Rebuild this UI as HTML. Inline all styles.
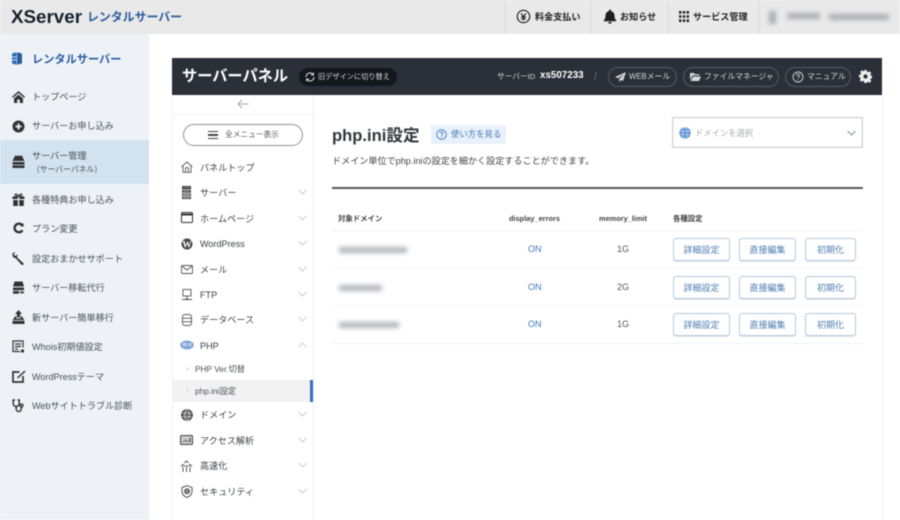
<!DOCTYPE html>
<html lang="ja"><head><meta charset="utf-8"><title>php.ini設定</title>
<style>
*{box-sizing:border-box}
html,body{margin:0;padding:0;width:900px;height:520px;overflow:hidden;background:#fff}
body{position:relative;font-family:"Liberation Sans","Noto Sans CJK JP",sans-serif;color:#444;filter:blur(.45px)}
.a{position:absolute;white-space:nowrap}
.t{position:absolute;white-space:nowrap;line-height:16px;height:16px}
svg{position:absolute;display:block}
.s{font-size:9.1px;color:#4a4f55}
.m{font-size:9.1px;color:#3d4148}
.top{font-size:9.1px;font-weight:700;color:#222}
.btn{position:absolute;height:23px;border:1px solid #b3c9da;border-radius:3px;color:#4f7db0;font-size:9px;line-height:22px;text-align:center;background:#fff;box-shadow:0 1px 0 #dfe6ec}
.pill{position:absolute;top:67px;height:20px;border:1px solid #565b63;border-radius:10px;color:#d6d8da;font-size:7.800px;line-height:18px;white-space:nowrap}
.blur{position:absolute;background:#85898e;filter:blur(2.4px);opacity:.62}
.line{position:absolute;height:1px;background:#eef0f1}
.th{font-size:7.400px;font-weight:700;color:#444}
.on{font-size:9px;color:#3f78bb}
.lim{font-size:9px;color:#555}
</style></head><body>

<!-- top bar -->
<div class="a" style="left:0;top:0;width:900px;height:34px;background:#e9e9e9"></div>
<div class="t" style="left:11px;top:7px;height:20px;line-height:20px;font-size:18.800px;font-weight:700;color:#15212d">XServer</div>
<div class="t" style="left:87px;top:9px;font-size:11.900px;font-weight:700;color:#2a5c9e">レンタルサーバー</div>
<div class="a" style="left:505px;top:0;width:1px;height:34px;background:#dcdcdc"></div>
<div class="a" style="left:591px;top:0;width:1px;height:34px;background:#dcdcdc"></div>
<div class="a" style="left:668px;top:0;width:1px;height:34px;background:#dcdcdc"></div>
<div class="a" style="left:759px;top:0;width:1px;height:34px;background:#dcdcdc"></div>
<svg style="left:516px;top:9px" width="15" height="15" viewBox="0 0 15 15" fill="none" stroke="#222" stroke-width="1.2"><circle cx="7.5" cy="7.5" r="6.2"/><path d="M5 4.500l2.500 3 2.500-3M7.500 7.500v4M5.200 8h4.600M5.200 9.800h4.600"/></svg>
<div class="t top" style="left:535px;top:9px">料金支払い</div>
<svg style="left:603px;top:9px" width="14" height="15" viewBox="0 0 14 15" fill="#1e1e1e"><path d="M7 0.500a1 1 0 0 1 1 1v.6c2.300.5 3.500 2.300 3.500 4.600 0 2.500.7 3.600 1.800 4.800v.8H.7v-.8C1.800 10.300 2.500 9.200 2.500 6.700c0-2.300 1.200-4.100 3.500-4.600v-.6a1 1 0 0 1 1-1zM5.300 13h3.400a1.700 1.700 0 0 1-3.400 0z"/></svg>
<div class="t top" style="left:620px;top:9px">お知らせ</div>
<svg style="left:679px;top:11px" width="10" height="11" viewBox="0 0 10 11" fill="#222"><path d="M0 0h2.400v2.600H0zM3.800 0h2.400v2.600H3.800zM7.600 0H10v2.600H7.600zM0 4.200h2.400v2.600H0zM3.800 4.200h2.400v2.600H3.800zM7.600 4.200H10v2.600H7.600zM0 8.400h2.400V11H0zM3.800 8.400h2.400V11H3.800zM7.600 8.400H10V11H7.600z"/></svg>
<div class="t top" style="left:693px;top:9px">サービス管理</div>
<div class="blur" style="left:769px;top:11px;width:7px;height:13px"></div>
<div class="blur" style="left:787px;top:13px;width:33px;height:6px"></div>
<div class="blur" style="left:829px;top:14px;width:60px;height:6px"></div>

<!-- left sidebar -->
<div class="a" style="left:0;top:34px;width:149px;height:486px;background:#eef2f7"></div>
<div class="a" style="left:0;top:140px;width:149px;height:44px;background:#d2e2ee"></div>
<svg style="left:11px;top:52px" width="12" height="13" viewBox="0 0 12 13"><path d="M6 .5c2 0 5 .8 5 1.800v8.400c0 1-3 1.800-5 1.800z" fill="#2a5c9e"/><path d="M5.500.5C3.500.5 1 1.300 1 2.300v8.400c0 1 2.500 1.800 4.500 1.800z" fill="#2f6cb5"/><path d="M1 5h4.500M1 8h4.500" stroke="#fff" stroke-width=".8"/></svg>
<div class="t" style="left:32px;top:52px;font-size:11.200px;font-weight:700;color:#2a5c9e">レンタルサーバー</div>

<svg style="left:12px;top:91px" width="13" height="12" viewBox="0 0 13 12" fill="#333"><path d="M6.500 0L0 5.800l1 1.100 5.500-4.900 5.500 4.900 1-1.100zM2 7.500V12h3.200V8.500h2.600V12H11V7.500L6.500 3.500z"/></svg>
<div class="t s" style="left:32px;top:89px">トップページ</div>
<svg style="left:12px;top:120px" width="13" height="13" viewBox="0 0 13 13"><circle cx="6.500" cy="6.500" r="6" fill="#333"/><path d="M6.500 3.500v6M3.500 6.500h6" stroke="#eef2f7" stroke-width="1.800"/></svg>
<div class="t s" style="left:32px;top:118px">サーバーお申し込み</div>
<svg style="left:12px;top:155px" width="13" height="13" viewBox="0 0 13 13" fill="#333"><path d="M3 .8h7l2.400 5.200H.6zM.5 7h12v2.600H.5zM.5 10.400h12V13H.5z"/></svg>
<div class="t s" style="left:32px;top:148px">サーバー管理</div>
<div class="t" style="left:32px;top:162px;font-size:7.800px;color:#4a4f55">（サーバーパネル）</div>
<svg style="left:12px;top:193px" width="13" height="13" viewBox="0 0 13 13" fill="#333"><path d="M.5 3.500h5.300v2.500H.5zM7.200 3.500h5.300v2.500H7.200zM1.200 7h4.600v6H1.200zM7.200 7h4.600v6H7.200z"/><path d="M6.500 3.300C5 .5 2.800.5 3 2c.2 1 2 1.300 3.500 1.300zM6.500 3.300C8 .5 10.200.5 10 2c-.2 1-2 1.300-3.500 1.300z" fill="none" stroke="#333" stroke-width="1.100"/></svg>
<div class="t s" style="left:32px;top:192px">各種特典お申し込み</div>
<svg style="left:13px;top:222px" width="11" height="12" viewBox="0 0 11 12" fill="none" stroke="#333" stroke-width="2.400"><path d="M9.200 3.200A4.300 4.300 0 1 0 9.500 8.300"/><path d="M10.600 1v3.500H7.100z" stroke="none" fill="#333"/></svg>
<div class="t s" style="left:32px;top:221px">プラン変更</div>
<svg style="left:12px;top:252px" width="13" height="13" viewBox="0 0 13 13" fill="#333"><path d="M.4 2.800C.4 1.200 1.800.2 3.500.3L1.900 2l.4 1.500 1.500.4 1.600-1.600c.3 1.200 0 2.200-.6 2.900l6.400 5.800c.5.5.5 1.200 0 1.700s-1.200.5-1.700 0L3.600 6.100C2 6.300.4 4.800.4 2.800z"/></svg>
<div class="t s" style="left:32px;top:251px">設定おまかせサポート</div>
<svg style="left:12px;top:281px" width="13" height="13" viewBox="0 0 13 13" fill="#333"><path d="M2.500.5h8l1.500 5H1zM1 6.500h11v2.700H1zM1 10h6v2.800H1zM8 10.500h4v1.800H8z"/></svg>
<div class="t s" style="left:32px;top:280px">サーバー移転代行</div>
<svg style="left:12px;top:310px" width="13" height="14" viewBox="0 0 13 14" fill="#333"><path d="M6.500 0L10 4H8v3.500H5V4H3zM3.500 6h.8v2.500h4.400V6h.8l3 4H.5zM.5 10.800h12V14H.5z"/></svg>
<div class="t s" style="left:32px;top:310px">新サーバー簡単移行</div>
<svg style="left:12px;top:340px" width="13" height="13" viewBox="0 0 13 13" fill="none" stroke="#333" stroke-width="1.200"><path d="M8 11.500H1V1h10v6.500M3 4h6M3 6.500h6M3 9h3"/><path d="M9 9.500h3v3H9z" fill="#333" stroke="none"/></svg>
<div class="t s" style="left:32px;top:339px">Whois初期値設定</div>
<svg style="left:12px;top:370px" width="14" height="13" viewBox="0 0 14 13" fill="none" stroke="#333" stroke-width="1.700"><path d="M7.500 2H1v10h10V6"/><path d="M5.500 8L13 1" stroke-width="1.500"/></svg>
<div class="t s" style="left:32px;top:369px">WordPressテーマ</div>
<svg style="left:12px;top:399px" width="13" height="14" viewBox="0 0 13 14" fill="none" stroke="#333" stroke-width="1.500"><path d="M3 1H1.200v3.500a3 3 0 0 0 6 0V1H5.500"/><path d="M4.200 7.500V10a2.500 2.500 0 0 0 5 0V8"/><circle cx="9.500" cy="6.500" r="1.400"/></svg>
<div class="t s" style="left:32px;top:398px">Webサイトトラブル診断</div>

<!-- panel header -->
<div class="a" style="left:172px;top:58px;width:710px;height:37px;background:#2b3038"></div>
<div class="t" style="left:182px;top:67px;height:20px;line-height:20px;font-size:15.200px;font-weight:700;color:#fff">サーバーパネル</div>
<div class="a" style="left:299px;top:68px;width:98px;height:18px;border-radius:9px;background:#14171c"></div>
<svg style="left:305px;top:72px" width="10" height="10" viewBox="0 0 10 10" fill="none" stroke="#d6d8da" stroke-width="1.100"><path d="M1 5a4 4 0 0 1 7-2.600M9 5a4 4 0 0 1-7 2.600"/><path d="M8.500 .5v2.500H6M1.500 9.500V7H4" stroke-width=".9"/></svg>
<div class="t" style="left:318px;top:69px;font-size:7.200px;color:#d6d8da">旧デザインに切り替え</div>
<div class="t" style="left:497px;top:69px;font-size:7.700px;color:#d6d8da">サーバーID</div>
<div class="t" style="left:540px;top:68px;font-size:9.800px;font-weight:700;color:#fff">xs507233</div>
<div class="t" style="left:594px;top:69px;font-size:11px;color:#6a6f76">/</div>
<div class="pill" style="left:608px;width:69px;padding-left:20px">WEBメール</div>
<svg style="left:615px;top:72px" width="11" height="10" viewBox="0 0 11 10" fill="#d6d8da"><path d="M11 0L0 5l3 1.300L9 2 4.200 7v3l1.800-2 2 1z"/></svg>
<div class="pill" style="left:683px;width:96px;padding-left:20px">ファイルマネージャ</div>
<svg style="left:690px;top:72px" width="11" height="10" viewBox="0 0 11 10" fill="#d6d8da"><path d="M0 1h4l1 1.200h4.500v1.300H2.500L0 8zM3 4.500h8L9 9H.6z"/></svg>
<div class="pill" style="left:785px;width:66px;padding-left:21px">マニュアル</div>
<svg style="left:792px;top:71px" width="12" height="12" viewBox="0 0 12 12" fill="none" stroke="#d6d8da" stroke-width=".9"><circle cx="6" cy="6" r="5"/><path d="M4.500 4.700a1.500 1.500 0 1 1 2.200 1.300c-.5.300-.7.600-.7 1.100M6 8.200v1"/></svg>
<svg style="left:859px;top:70px" width="13" height="13" viewBox="0 0 13 13"><path d="M5.300 0h2.400l.3 1.700 1.100.5L10.600 1.200l1.700 1.700-1 1.500.5 1.100 1.700.3v2.400l-1.700.3-.5 1.100 1 1.500-1.700 1.700-1.500-1-1.100.5-.3 1.700H5.300L5 11.300l-1.100-.5-1.500 1L.7 10.100l1-1.500-.5-1.100L0 7.200V4.800l1.700-.3.500-1.100-1-1.500L2.900 .2l1.500 1 1.100-.5z" fill="#eee"/><circle cx="6.500" cy="6.500" r="2.100" fill="#2b3038"/></svg>

<!-- panel borders -->
<div class="a" style="left:172px;top:95px;width:1px;height:425px;background:#f0f1f2"></div>
<div class="a" style="left:313px;top:95px;width:1px;height:425px;background:#eceef0"></div>
<div class="a" style="left:882px;top:95px;width:1px;height:425px;background:#eceef0"></div>
<div class="line" style="left:173px;top:114px;width:140px"></div>

<!-- nav -->
<svg style="left:237px;top:99px" width="12" height="10" viewBox="0 0 12 10" fill="none" stroke="#a8abae" stroke-width="1"><path d="M11.500 5H1M5 1L1 5l4 4"/></svg>
<div class="a" style="left:183px;top:124px;width:120px;height:22px;border:1px solid #8f9398;border-radius:11px"></div>
<div class="a" style="left:208px;top:131px;width:10px;height:8px;border-top:1.500px solid #444;border-bottom:1.500px solid #444"></div>
<div class="a" style="left:208px;top:134.300px;width:10px;height:1.400px;background:#444"></div>
<div class="t" style="left:225px;top:127px;font-size:7.700px;color:#555">全メニュー表示</div>

<svg style="left:181px;top:161px" width="12" height="12" viewBox="0 0 12 12" fill="none" stroke="#555" stroke-width=".9"><path d="M.5 5.800L6 1l5.500 4.800M2 5v6.300h8V5M4.500 11V8a1.500 1.500 0 0 1 3 0v3"/></svg>
<div class="t m" style="left:200px;top:160px">パネルトップ</div>
<svg style="left:182px;top:186px" width="9" height="13" viewBox="0 0 9 13" fill="#333"><path d="M0 0h9v3.400H0zM0 4.200h9v2.600H0zM0 7.600h9v2.200H0zM0 10.600h9V13H0z"/><path d="M1 1.500h7M1 5.500h7M1 8.700h7M1 11.800h7" stroke="#eee" stroke-width=".6"/></svg>
<div class="t m" style="left:200px;top:185px">サーバー</div>
<svg style="left:181px;top:212px" width="12" height="11" viewBox="0 0 12 11" fill="none" stroke="#333"><rect x=".5" y=".5" width="11" height="10" rx="1"/><path d="M.5 2.500h11" stroke-width="2"/></svg>
<div class="t m" style="left:200px;top:211px">ホームページ</div>
<svg style="left:181px;top:238px" width="12" height="12" viewBox="0 0 12 12"><circle cx="6" cy="6" r="5.500" fill="#444"/><text x="6" y="9.300" text-anchor="middle" font-family="Liberation Serif" font-weight="700" font-size="9.500" fill="#fff">W</text></svg>
<div class="t m" style="left:200px;top:236px">WordPress</div>
<svg style="left:181px;top:265px" width="12" height="9" viewBox="0 0 12 9" fill="none" stroke="#555" stroke-width=".9"><rect x=".5" y=".5" width="11" height="8" rx="1"/><path d="M.8 1L6 5l5.200-4"/></svg>
<div class="t m" style="left:200px;top:262px">メール</div>
<svg style="left:182px;top:289px" width="10" height="12" viewBox="0 0 10 12" fill="none" stroke="#555" stroke-width=".9"><rect x="1" y=".5" width="8" height="6.500"/><path d="M5 7v3M0 10.500h10M3.500 10h3" /></svg>
<div class="t m" style="left:200px;top:287px">FTP</div>
<svg style="left:182px;top:314px" width="10" height="12" viewBox="0 0 10 12" fill="none" stroke="#555" stroke-width=".9"><rect x=".5" y=".5" width="9" height="11" rx="2.500"/><path d="M.5 4.200h9M.5 7.800h9"/></svg>
<div class="t m" style="left:200px;top:312px">データベース</div>
<svg style="left:180px;top:340px" width="14" height="10" viewBox="0 0 14 10"><ellipse cx="7" cy="5" rx="6.800" ry="4.500" fill="#7ea5d4"/><path d="M3 3.500h2v2H3zM9 3.500h2v2H9zM6.200 3v3.500" stroke="#e8f0f8" stroke-width=".7" fill="none"/></svg>
<div class="t m" style="left:200px;top:338px">PHP</div>

<div class="a" style="left:173px;top:380px;width:137px;height:22px;background:#f2f2f3"></div>
<div class="a" style="left:310px;top:380px;width:3px;height:22px;background:#3570c0"></div>
<div class="t" style="left:186px;top:361px;font-size:8px;color:#b5b8bb">›</div>
<div class="t" style="left:195px;top:361px;font-size:8.300px;color:#4a4f55">PHP Ver.切替</div>
<div class="t" style="left:186px;top:383px;font-size:8px;color:#b5b8bb">›</div>
<div class="t" style="left:195px;top:383px;font-size:8.300px;color:#4a4f55">php.ini設定</div>

<svg style="left:181px;top:409px" width="12" height="12" viewBox="0 0 12 12" fill="none" stroke="#333" stroke-width="1.100"><circle cx="6" cy="6" r="5.300" fill="#666"/><ellipse cx="6" cy="6" rx="2.400" ry="5.300" stroke="#ddd" stroke-width=".7"/><path d="M.8 4.200h10.400M.8 7.800h10.400" stroke="#ddd" stroke-width=".7"/></svg>
<div class="t m" style="left:200px;top:407px">ドメイン</div>
<svg style="left:180px;top:435px" width="13" height="10" viewBox="0 0 13 10" fill="none" stroke="#444"><rect x=".5" y=".5" width="12" height="9" rx="1" fill="#ccc"/><path d="M3 7V6M5.500 7V4.500M8 7V5.500M10 7V3" stroke="#333"/></svg>
<div class="t m" style="left:200px;top:433px">アクセス解析</div>
<svg style="left:180px;top:460px" width="13" height="12" viewBox="0 0 13 12" fill="none" stroke="#555" stroke-width="1"><path d="M6.500 12V5M3 12V7M10 12V7M4.500 3L6.500 1l2 2M1 6.500L3 4.500l2 2M8 6.500l2-2 2 2"/></svg>
<div class="t m" style="left:200px;top:458px">高速化</div>
<svg style="left:181px;top:485px" width="12" height="13" viewBox="0 0 12 13" fill="none" stroke="#555" stroke-width="1"><path d="M6 .7L11 2.500v4c0 3-2.500 5-5 6-2.500-1-5-3-5-6v-4z"/><circle cx="6" cy="6.300" r="2.500" fill="#888"/></svg>
<div class="t m" style="left:200px;top:484px">セキュリティ</div>

<svg style="left:298px;top:189px" width="9" height="6" viewBox="0 0 9 6" fill="none" stroke="#c5c8cb" stroke-width=".9"><path d="M.5 1l4 4 4-4"/></svg>
<svg style="left:298px;top:215px" width="9" height="6" viewBox="0 0 9 6" fill="none" stroke="#c5c8cb" stroke-width=".9"><path d="M.5 1l4 4 4-4"/></svg>
<svg style="left:298px;top:240px" width="9" height="6" viewBox="0 0 9 6" fill="none" stroke="#c5c8cb" stroke-width=".9"><path d="M.5 1l4 4 4-4"/></svg>
<svg style="left:298px;top:266px" width="9" height="6" viewBox="0 0 9 6" fill="none" stroke="#c5c8cb" stroke-width=".9"><path d="M.5 1l4 4 4-4"/></svg>
<svg style="left:298px;top:291px" width="9" height="6" viewBox="0 0 9 6" fill="none" stroke="#c5c8cb" stroke-width=".9"><path d="M.5 1l4 4 4-4"/></svg>
<svg style="left:298px;top:316px" width="9" height="6" viewBox="0 0 9 6" fill="none" stroke="#c5c8cb" stroke-width=".9"><path d="M.5 1l4 4 4-4"/></svg>
<svg style="left:298px;top:342px" width="9" height="6" viewBox="0 0 9 6" fill="none" stroke="#c5c8cb" stroke-width=".9"><path d="M.5 5l4-4 4 4"/></svg>
<svg style="left:298px;top:411px" width="9" height="6" viewBox="0 0 9 6" fill="none" stroke="#c5c8cb" stroke-width=".9"><path d="M.5 1l4 4 4-4"/></svg>
<svg style="left:298px;top:437px" width="9" height="6" viewBox="0 0 9 6" fill="none" stroke="#c5c8cb" stroke-width=".9"><path d="M.5 1l4 4 4-4"/></svg>
<svg style="left:298px;top:462px" width="9" height="6" viewBox="0 0 9 6" fill="none" stroke="#c5c8cb" stroke-width=".9"><path d="M.5 1l4 4 4-4"/></svg>
<svg style="left:298px;top:488px" width="9" height="6" viewBox="0 0 9 6" fill="none" stroke="#c5c8cb" stroke-width=".9"><path d="M.5 1l4 4 4-4"/></svg>

<!-- main -->
<div class="t" style="left:332px;top:126px;height:20px;line-height:20px;font-size:16.600px;font-weight:700;color:#33383e">php.ini設定</div>
<div class="a" style="left:431px;top:125px;width:75px;height:19px;background:#e8f1fa"></div>
<svg style="left:436px;top:129px" width="11" height="11" viewBox="0 0 11 11" fill="none" stroke="#3f78bb" stroke-width=".9"><circle cx="5.500" cy="5.500" r="4.800"/><path d="M4 4.300a1.500 1.500 0 1 1 2.300 1.300c-.5.300-.8.600-.8 1.100M5.500 7.600v1"/></svg>
<div class="t" style="left:451px;top:126px;font-size:8.400px;color:#3f78bb">使い方を見る</div>
<div class="t" style="left:332px;top:153px;font-size:9.100px;color:#444">ドメイン単位でphp.iniの設定を細かく設定することができます。</div>

<div class="a" style="left:672px;top:117px;width:191px;height:31px;border:1px solid #cfd2d4;box-shadow:inset 0 0 0 .5px #e4e6e7"></div>
<svg style="left:679px;top:127px" width="12" height="12" viewBox="0 0 12 12" fill="none"><circle cx="6" cy="6" r="5.700" fill="#5f93d6"/><ellipse cx="6" cy="6" rx="2.500" ry="5.500" stroke="#cfe0f3" stroke-width=".6"/><path d="M.8 4.300h10.400M.8 7.700h10.400" stroke="#cfe0f3" stroke-width=".6"/></svg>
<div class="t" style="left:695px;top:125px;font-size:8.300px;color:#a8abae">ドメインを選択</div>
<svg style="left:847px;top:130px" width="9" height="6" viewBox="0 0 9 6" fill="none" stroke="#8b8f93" stroke-width="1"><path d="M.5 1l4 4 4-4"/></svg>

<div class="a" style="left:332px;top:187px;width:531px;height:1.500px;background:#5a5a5a"></div>

<div class="t th" style="left:338px;top:211px">対象ドメイン</div>
<div class="t th" style="left:509px;top:211px">display_errors</div>
<div class="t th" style="left:599px;top:211px">memory_limit</div>
<div class="t th" style="left:673px;top:211px">各種設定</div>
<div class="line" style="left:332px;top:230px;width:531px"></div>
<div class="line" style="left:332px;top:268px;width:531px;background:#f4f5f6"></div>
<div class="line" style="left:332px;top:305px;width:531px;background:#f4f5f6"></div>
<div class="line" style="left:332px;top:343px;width:531px"></div>

<div class="blur" style="left:339px;top:247px;width:68px;height:6px"></div>
<div class="blur" style="left:339px;top:285px;width:43px;height:6px"></div>
<div class="blur" style="left:339px;top:322px;width:60px;height:6px"></div>

<div class="t on" style="left:528px;top:241px">ON</div>
<div class="t on" style="left:528px;top:279px">ON</div>
<div class="t on" style="left:528px;top:316px">ON</div>
<div class="t lim" style="left:617px;top:241px">1G</div>
<div class="t lim" style="left:617px;top:279px">2G</div>
<div class="t lim" style="left:617px;top:316px">1G</div>

<div class="btn" style="left:673px;top:238px;width:57px">詳細設定</div>
<div class="btn" style="left:739px;top:238px;width:57px">直接編集</div>
<div class="btn" style="left:805px;top:238px;width:51px">初期化</div>
<div class="btn" style="left:673px;top:276px;width:57px">詳細設定</div>
<div class="btn" style="left:739px;top:276px;width:57px">直接編集</div>
<div class="btn" style="left:805px;top:276px;width:51px">初期化</div>
<div class="btn" style="left:673px;top:313px;width:57px">詳細設定</div>
<div class="btn" style="left:739px;top:313px;width:57px">直接編集</div>
<div class="btn" style="left:805px;top:313px;width:51px">初期化</div>

</body></html>
